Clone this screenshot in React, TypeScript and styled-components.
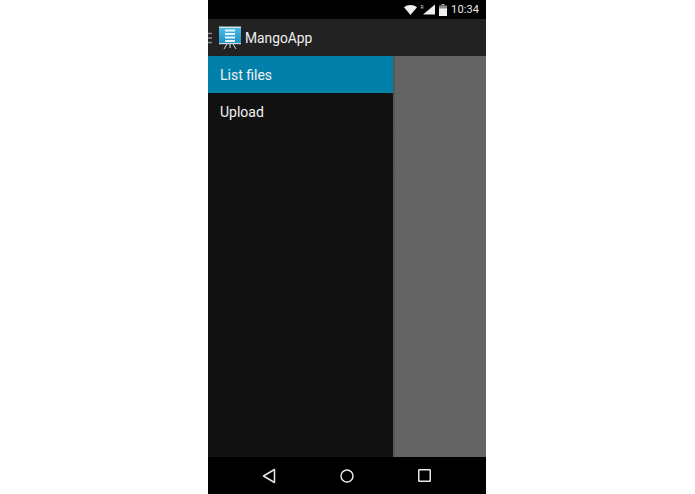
import React from 'react';
import styled, { createGlobalStyle } from 'styled-components';

const GlobalStyle = createGlobalStyle`
  html, body {
    margin: 0;
    padding: 0;
    height: 100%;
    background: #fff;
  }
  #root {
    height: 100%;
  }
`;

const Page = styled.div`
  width: 695px;
  height: 494px;
  display: flex;
  justify-content: flex-start;
  padding-left: 208px;
  box-sizing: border-box;
  font-family: Roboto, "Liberation Sans", sans-serif;
`;

const Phone = styled.div`
  width: 278px;
  height: 494px;
  display: flex;
  flex-direction: column;
  background: #000;
`;

const StatusBar = styled.div`
  height: 19px;
  background: #000;
  display: flex;
  align-items: center;
  justify-content: flex-end;
  padding-right: 7px;
  color: #e8e8e8;
  font-size: 11px;
  letter-spacing: 0.1px;
`;

const StatusIcons = styled.div`
  display: flex;
  align-items: center;
  margin-right: 4px;
`;

const ActionBar = styled.div`
  height: 37px;
  background: #222222;
  display: flex;
  align-items: center;
  color: #f0f0f0;
  font-size: 13.8px;
`;

const Title = styled.span`
  margin-left: 3px;
  padding-top: 1px;
`;

const Content = styled.div`
  flex: 1;
  display: flex;
  min-height: 0;
`;

const Drawer = styled.div`
  width: 185px;
  background: #111111;
  display: flex;
  flex-direction: column;
`;

const DrawerItem = styled.div<{ $active?: boolean }>`
  height: 37px;
  display: flex;
  align-items: center;
  padding: 1px 0 0 12px;
  box-sizing: border-box;
  color: #f2f2f2;
  font-size: 14px;
  background: ${(p) => (p.$active ? '#0280aa' : 'transparent')};
`;

const Scrim = styled.div`
  flex: 1;
  background: #646464;
  border-left: 2px solid #575757;
  display: flex;
  flex-direction: column;
`;

const ScrimRow = styled.div`
  height: 37px;
  margin-right: 12px;
  border-bottom: 1px solid #606060;
`;

const NavBar = styled.div`
  height: 37px;
  background: #000;
  display: flex;
  align-items: center;
  justify-content: center;
  gap: 64px;
  padding-right: 2px;
  box-sizing: border-box;
`;

const HamburgerIcon = () => (
  <svg width="4" height="12" viewBox="0 0 4 12" style={{ display: 'block' }}>
    <path d="M0 1.5H4M0 6H4M0 10.5H4" stroke="#8a8a8a" strokeWidth="1.4" />
  </svg>
);

const AppIcon = () => (
  <svg width="23" height="23" viewBox="0 0 23 23" style={{ display: 'block', marginLeft: 7 }}>
    <defs>
      <linearGradient id="board" x1="0" y1="0" x2="0" y2="1">
        <stop offset="0" stopColor="#4fbde8" />
        <stop offset="1" stopColor="#1f94c6" />
      </linearGradient>
    </defs>
    <rect x="0" y="1" width="22" height="16" fill="url(#board)" />
    <rect x="0" y="0.5" width="22" height="1.5" fill="#cfe6ee" />
    <path d="M6 4.5H16M6 8H16M6 11.5H16M6 15H16" stroke="#e8f8ff" strokeWidth="2" />
    <rect x="0" y="17" width="22" height="1.2" fill="#cfd8dc" />
    <path d="M8 18L5 23M14 18L17 23M11 18V22" stroke="#d8d8d8" strokeWidth="1" fill="none" />
  </svg>
);

const WifiIcon = () => (
  <svg width="13" height="10" viewBox="0 0 13 10" style={{ display: 'block' }}>
    <path d="M0 2.2C3.8 -0.7 9.2 -0.7 13 2.2L6.5 10Z" fill="#f0f0f0" />
  </svg>
);

const SignalIcon = () => (
  <svg width="15" height="12" viewBox="0 0 15 12" style={{ display: 'block', marginLeft: 3 }}>
    <path d="M15 0.5V10.5H3Z" fill="#f0f0f0" />
    <text x="0.5" y="4.5" fontSize="5" fontFamily="Roboto" fill="#cccccc">R</text>
  </svg>
);

const BatteryIcon = () => (
  <svg width="8" height="12" viewBox="0 0 8 12" style={{ display: 'block', marginLeft: 4 }}>
    <rect x="2.5" y="0" width="3" height="1.5" fill="#aaaaaa" />
    <rect x="0" y="1.5" width="8" height="10.5" fill="#8a8a8a" />
    <rect x="0" y="4.5" width="8" height="7.5" fill="#f0f0f0" />
  </svg>
);

const BackIcon = () => (
  <svg width="14" height="16" viewBox="0 0 14 16">
    <path d="M12.5 1.5V14.5L1.5 8Z" fill="none" stroke="#e8e8e8" strokeWidth="1.5" strokeLinejoin="round" />
  </svg>
);

const HomeIcon = () => (
  <svg width="14" height="14" viewBox="0 0 14 14">
    <circle cx="7" cy="7" r="6" fill="none" stroke="#e8e8e8" strokeWidth="1.5" />
  </svg>
);

const RecentIcon = () => (
  <svg width="13" height="13" viewBox="0 0 13 13">
    <rect x="0.75" y="0.75" width="11.5" height="11.5" rx="0.5" fill="none" stroke="#e8e8e8" strokeWidth="1.5" />
  </svg>
);

export default function App() {
  return (
    <>
      <GlobalStyle />
      <Page>
        <Phone>
          <StatusBar>
            <StatusIcons>
              <WifiIcon />
              <SignalIcon />
              <BatteryIcon />
            </StatusIcons>
            10:34
          </StatusBar>
          <ActionBar>
            <HamburgerIcon />
            <AppIcon />
            <Title>MangoApp</Title>
          </ActionBar>
          <Content>
            <Drawer>
              <DrawerItem $active>List files</DrawerItem>
              <DrawerItem>Upload</DrawerItem>
            </Drawer>
            <Scrim>
              <ScrimRow />
              <ScrimRow />
              <ScrimRow />
            </Scrim>
          </Content>
          <NavBar>
            <BackIcon />
            <HomeIcon />
            <RecentIcon />
          </NavBar>
        </Phone>
      </Page>
    </>
  );
}
